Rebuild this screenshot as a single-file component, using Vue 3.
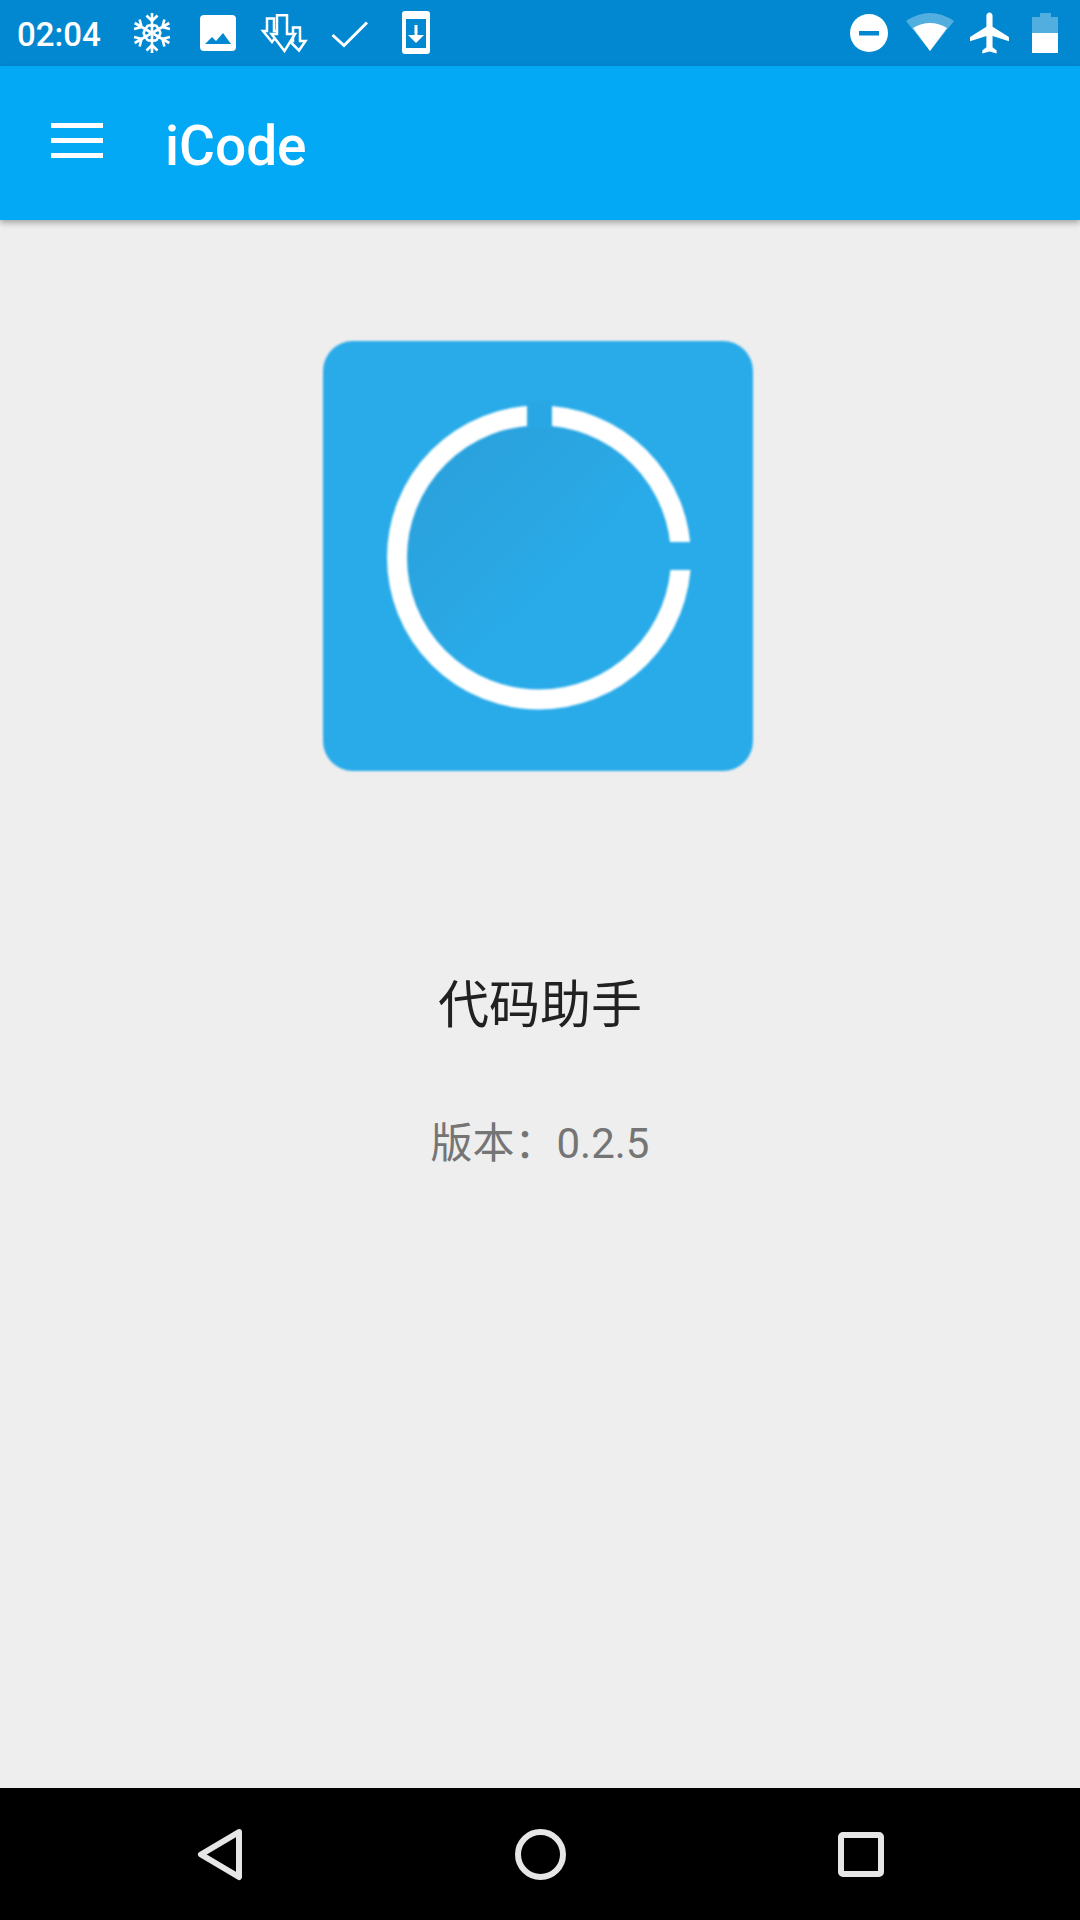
<script setup>
const snowArms = [0, 60, 120, 180, 240, 300]
</script>

<template>
  <div class="screen">
    <div class="status-bar">
      <span class="time">02:04</span>
      <div class="status-left">
        <svg class="box" viewBox="0 0 66 66">
          <g stroke="#fff" stroke-width="2.600" fill="none">
            <g v-for="a in snowArms" :key="a" :transform="`rotate(${a} 33 33)`">
              <path d="M33 33V13M27.500 15.500l5.500 5.500 5.500-5.500" />
              <path d="M28.500 25.500h9" />
            </g>
          </g>
        </svg>
        <svg class="box" viewBox="0 0 66 66">
          <rect x="15" y="15" width="36" height="36" rx="4" fill="#fff" />
          <path d="M20 44L27 37L31 41L38 33L46 44Z" fill="#0288d1" />
        </svg>
        <svg class="box" viewBox="0 0 66 66">
          <g stroke="#fff" stroke-width="2.500" fill="#0288d1">
            <path d="M16 18.500h7V31h6L21 42L12 31h4Z" />
            <path d="M42 27.500h7V41h5.500L48 50.500L38.500 41H42Z" />
            <path d="M26 15.200h10V34h8L33.500 51L20.500 34H26Z" />
          </g>
        </svg>
        <svg class="box" viewBox="0 0 66 66">
          <path d="M15.500 35L27 45.500L50 22.500" stroke="#fff" stroke-width="3" fill="none" />
        </svg>
        <svg class="box" viewBox="0 0 66 66">
          <rect x="19" y="11" width="28" height="43" rx="3" fill="#fff" />
          <rect x="23" y="19" width="20" height="29" fill="#0288d1" />
          <path d="M31.500 25h3v10H41L33 43L25 35h6.500Z" fill="#fff" />
        </svg>
      </div>
      <div class="status-right">
        <svg class="box-r" viewBox="0 0 60 66">
          <circle cx="34" cy="33" r="19" fill="#fff" />
          <rect x="24" y="31" width="20" height="4.500" fill="#0288d1" />
        </svg>
        <svg class="box-r" viewBox="0 0 60 66">
          <path d="M35 51L11 21Q35 5 59 21Z" fill="#fff" opacity="0.32" />
          <path d="M35 51L18 28Q35 18 52 28Z" fill="#fff" />
        </svg>
        <svg class="box-r" viewBox="0 0 60 66">
          <path
            transform="translate(10.9 8.400) scale(2.050)"
            d="M21 16v-2l-8-5V3.500c0-.83-.67-1.500-1.500-1.500S10 2.670 10 3.500V9l-8 5v2l8-2.500V19l-2 1.500V22l3.500-1 3.500 1v-1.500L13 19v-5.500l8 2.500z"
            fill="#fff"
          />
        </svg>
        <svg class="box-r" viewBox="0 0 60 66">
          <path d="M25 13h11v4h7v16H17V17h8Z" fill="#fff" opacity="0.32" />
          <rect x="17" y="33" width="26" height="20" fill="#fff" />
        </svg>
      </div>
    </div>

    <div class="app-bar">
      <div class="menu">
        <span></span>
        <span></span>
        <span></span>
      </div>
      <span class="app-title">iCode</span>
    </div>

    <div class="content">
      <svg class="logo" viewBox="0 0 430 430">
        <defs>
          <linearGradient id="inner" x1="0.1" y1="0.2" x2="0.7" y2="0.8">
            <stop offset="0" stop-color="#2aa2dd" />
            <stop offset="0.45" stop-color="#2aa7e3" />
            <stop offset="0.7" stop-color="#29abe9" />
          </linearGradient>
        </defs>
        <rect width="430" height="430" rx="30" fill="#29abe9" />
        <circle cx="216" cy="216.500" r="134" fill="url(#inner)" />
        <circle cx="216" cy="216.500" r="142" fill="none" stroke="#fff" stroke-width="20" />
        <rect x="204" y="60" width="25" height="27" fill="#29a7e4" />
        <rect x="345" y="201" width="34" height="28" fill="#29abe9" />
      </svg>
      <div class="name">代码助手</div>
      <div class="version">版本：0.2.5</div>
    </div>

    <div class="nav-bar">
      <div class="nav-item">
        <svg class="nav-icon" viewBox="0 0 60 60">
          <path d="M49 8L11 30.500L49 53Z" fill="none" stroke="#e6e6e6" stroke-width="6" stroke-linejoin="round" />
        </svg>
      </div>
      <div class="nav-item">
        <svg class="nav-icon" viewBox="0 0 60 60">
          <circle cx="30.500" cy="30.500" r="22.500" fill="none" stroke="#e6e6e6" stroke-width="6" />
        </svg>
      </div>
      <div class="nav-item">
        <svg class="nav-icon" viewBox="0 0 60 60">
          <rect x="11" y="11" width="40" height="39" rx="2" fill="none" stroke="#e6e6e6" stroke-width="6" />
        </svg>
      </div>
    </div>
  </div>
</template>

<style scoped>
.screen {
  width: 1080px;
  height: 1920px;
  display: flex;
  flex-direction: column;
  background: #eeeeee;
  overflow: hidden;
  font-family: Roboto, "Noto Sans CJK SC", sans-serif;
}

.status-bar {
  height: 66px;
  flex: none;
  display: flex;
  align-items: center;
  padding: 0 5px 0 17px;
  background: #0288d1;
  color: #fff;
}

.time {
  width: 102px;
  padding-top: 2px;
  font-size: 33px;
  font-weight: 500;
}

.status-left {
  display: flex;
}

.status-right {
  display: flex;
  margin-left: auto;
}

.box {
  width: 66px;
  height: 66px;
  display: block;
}

.box-r {
  width: 60px;
  height: 66px;
  display: block;
}

.app-bar {
  height: 154px;
  flex: none;
  display: flex;
  align-items: center;
  background: #03a9f4;
  box-shadow: 0 3px 6px rgba(0, 0, 0, 0.3);
  position: relative;
}

.menu {
  width: 52px;
  margin: 0 0 5px 51px;
  display: flex;
  flex-direction: column;
  gap: 10px;
}

.menu span {
  display: block;
  height: 5px;
  background: #fff;
}

.app-title {
  margin-left: 62px;
  margin-top: 5px;
  font-size: 55px;
  font-weight: 500;
  color: #fff;
}

.content {
  flex: 1;
  display: flex;
  flex-direction: column;
  align-items: center;
  padding-top: 121px;
}

.logo {
  width: 430px;
  height: 430px;
  display: block;
  margin-right: 4px;
  filter: blur(1.1px);
}

.name {
  margin-top: 198px;
  font-size: 51px;
  line-height: 74px;
  color: #212121;
}

.version {
  margin-top: 71px;
  font-size: 42px;
  line-height: 60px;
  color: #757575;
}

.nav-bar {
  height: 132px;
  flex: none;
  display: flex;
  justify-content: center;
  align-items: center;
  background: #000;
}

.nav-item {
  width: 320px;
  display: flex;
  justify-content: center;
}

.nav-icon {
  width: 60px;
  height: 60px;
  display: block;
}
</style>

<style>
body {
  background: #eeeeee;
}
</style>
